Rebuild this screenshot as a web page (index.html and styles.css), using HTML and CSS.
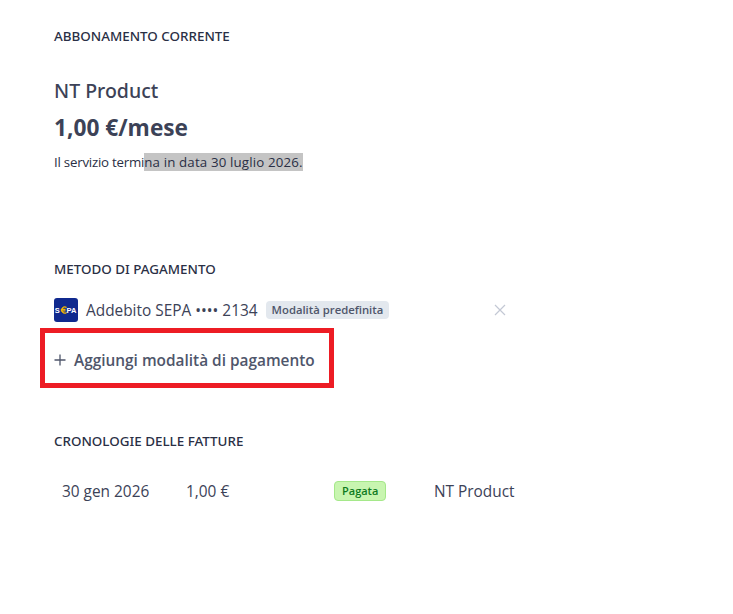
FILE: index.html
```html
<!DOCTYPE html>
<html lang="it">
<head>
    <meta charset="UTF-8">
    <meta name="viewport" content="width=device-width, initial-scale=1.0">
    <title>Abbonamento</title>
    <link rel="stylesheet" href="styles.css">
</head>
<body>

<div class="container">
    <section class="plan">
        <h2 class="section-title">ABBONAMENTO CORRENTE</h2>
        <div class="plan-name">NT Product</div>
        <div class="plan-price">1,00 €/mese</div>
        <p class="plan-note">Il servizio termi<span class="selected">na in data 30 luglio 2026.</span></p>
    </section>

    <section class="payment">
        <h2 class="section-title">METODO DI PAGAMENTO</h2>
        <div class="method-row">
            <svg class="sepa-logo" width="24" height="24" viewBox="0 0 24 24">
                <rect width="24" height="24" rx="3" fill="#10298e"/>
                <text x="0.8" y="14.8" class="sepa-text">S</text>
                <path d="M12.6 9.6 A3 3 0 1 0 12.6 14.4 M6.8 11.3 H11.5 M6.8 12.9 H11.5" fill="none" stroke="#f5b700" stroke-width="1.2"/>
                <text x="12.6" y="14.8" class="sepa-text">PA</text>
            </svg>
            <span class="method-name">Addebito SEPA •••• 2134</span>
            <span class="badge-default">Modalità predefinita</span>
            <svg class="remove-icon" width="12" height="12" viewBox="0 0 12 12">
                <path d="M1 1 L11 11 M11 1 L1 11" stroke="#c3c8d4" stroke-width="1.2" fill="none"/>
            </svg>
        </div>
        <div class="add-method">
            <svg width="12" height="12" viewBox="0 0 12 12">
                <path d="M6 0.5 V11.5 M0.5 6 H11.5" stroke="#4f566b" stroke-width="1.3" fill="none"/>
            </svg>
            <span>Aggiungi modalità di pagamento</span>
        </div>
    </section>

    <section class="invoices">
        <h2 class="section-title">CRONOLOGIE DELLE FATTURE</h2>
        <div class="invoice-row">
            <span class="invoice-date">30 gen 2026</span>
            <span class="invoice-amount">1,00 €</span>
            <span class="invoice-status"><span class="badge-paid">Pagata</span></span>
            <span class="invoice-product">NT Product</span>
        </div>
    </section>
</div>

</body>
</html>
```

FILE: styles.css
```css
body {
    font-family: "Open Sans", "Noto Sans", Arial, sans-serif;
    margin: 0;
    padding: 0;
    background: #fff;
    color: #3c4257;
}
.container {
    padding: 27px 0 0 54px;
}
.section-title {
    margin: 0;
    font-family: "Noto Sans", "Open Sans", Arial, sans-serif;
    font-size: 13.4px;
    line-height: 18px;
    font-weight: 500;
    color: #2a2f45;
}
.plan {
    height: 233px;
}
.plan-name {
    margin-top: 33px;
    font-family: "Noto Sans", "Open Sans", Arial, sans-serif;
    font-size: 19.5px;
    line-height: 26px;
    font-weight: 500;
}
.plan-price {
    margin-top: 9px;
    font-size: 22.7px;
    line-height: 30px;
    font-weight: 700;
}
.plan-note {
    margin: 9px 0 0;
    font-size: 13.3px;
    line-height: 20px;
    letter-spacing: -0.23px;
    color: #2a2f45;
}
.selected {
    background: #c4c4c4;
    letter-spacing: 0.15px;
}
.payment {
    height: 172px;
}
.method-row {
    display: flex;
    align-items: center;
    margin-top: 20px;
    height: 24px;
}
.sepa-logo {
    margin-right: 8px;
}
.sepa-text {
    font-family: "Liberation Sans", Arial, sans-serif;
    font-size: 7.5px;
    font-weight: 700;
    fill: #fff;
}
.method-name {
    font-size: 15.4px;
    color: #3c4257;
}
.badge-default {
    margin-left: 8px;
    padding: 0 6px;
    height: 18px;
    line-height: 18px;
    border-radius: 4px;
    background: #e3e8ee;
    color: #4f566b;
    font-size: 11.3px;
    font-weight: 600;
}
.remove-icon {
    margin-left: 105px;
}
.add-method {
    display: flex;
    align-items: center;
    gap: 8px;
    width: 275px;
    height: 46px;
    margin: 6px 0 0 -14px;
    padding: 4px 0 0 9px;
    border: 5px solid #ed1c24;
    font-size: 15.4px;
    font-weight: 600;
    color: #4f566b;
}
.invoice-row {
    display: flex;
    align-items: center;
    margin-top: 30px;
    padding-left: 8px;
    font-size: 15.4px;
    line-height: 24px;
}
.invoice-date {
    width: 124px;
}
.invoice-amount {
    width: 148px;
}
.invoice-status {
    width: 100px;
    display: flex;
}
.badge-paid {
    margin-top: -2px;
    padding: 0 7px;
    height: 20px;
    line-height: 18px;
    box-sizing: border-box;
    border: 1px solid #a5e88a;
    border-radius: 4px;
    background: #c8f5b0;
    color: #0f7a1e;
    font-size: 11px;
    font-weight: 600;
}
```
